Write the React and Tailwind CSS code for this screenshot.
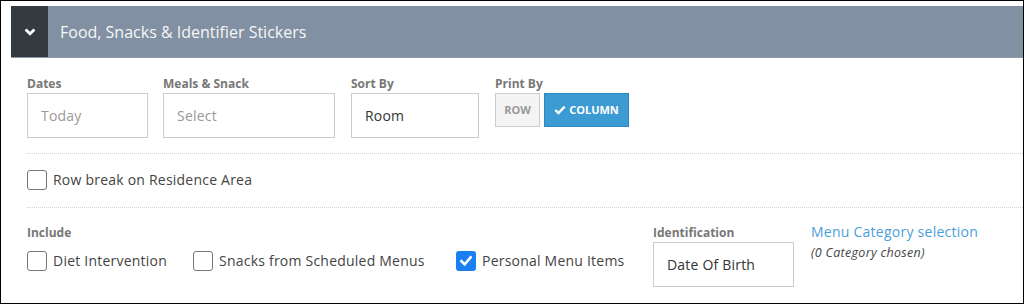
import React from 'react';

const Checkbox = ({ checked }) =>
  checked ? (
    <span className="w-[20px] h-[20px] rounded-[3px] bg-[#1a7ff2] flex items-center justify-center shrink-0">
      <svg width="14" height="14" viewBox="0 0 14 14">
        <path d="M2.5 7.2 L5.6 10.3 L11.6 3.4" fill="none" stroke="white" strokeWidth="2.6" strokeLinecap="square" />
      </svg>
    </span>
  ) : (
    <span className="w-[20px] h-[20px] rounded-[3px] border border-[#777] bg-white shrink-0" />
  );

const CheckItem = ({ label, checked, width }) => (
  <label className={`flex items-center gap-[6px] ${width}`}>
    <Checkbox checked={checked} />
    <span className="text-[14px] leading-[20px] tracking-[0.22px] text-[#444]">{label}</span>
  </label>
);

const Field = ({ label, value, placeholder, width }) => (
  <div className="flex flex-col">
    <span className="text-[12px] leading-[16px] font-bold text-[#777] mb-[1px]">{label}</span>
    <div className={`h-[45px] ${width} border border-[#ccc] flex items-center pl-[13px] text-[14px] tracking-[0.2px]`}>
      <span className={placeholder ? 'text-[#999]' : 'text-[#333]'}>{value}</span>
    </div>
  </div>
);

export default function App() {
  return (
    <div className="w-[1024px] h-[305px] bg-white font-['Open_Sans',sans-serif]">
      <div className="w-[1024px] h-[304px] border border-black flex flex-col">
        {/* panel header */}
        <div className="ml-[10px] mt-[5px] h-[52px] flex bg-[#8190a2] border-b border-dotted border-[#9ba4ae]">
          <div className="w-[37px] bg-[#353a41] flex items-center justify-center">
            <svg width="12" height="8" viewBox="0 0 12 8">
              <path d="M1.6 1.6 L6 5.8 L10.4 1.6" fill="none" stroke="white" strokeWidth="2.8" />
            </svg>
          </div>
          <div className="pl-[12px] flex items-center text-[16px] text-[#f7f7f7]">
            Food, Snacks &amp; Identifier Stickers
          </div>
        </div>

        <div className="pl-[26px]">
          {/* filters */}
          <div className="flex items-start pt-[18px] pb-[15px] border-b border-dotted border-[#d4d4d4]">
            <Field label="Dates" value="Today" placeholder width="w-[121px]" />
            <div className="ml-[15px]">
              <Field label="Meals & Snack" value="Select" placeholder width="w-[172px]" />
            </div>
            <div className="ml-[16px]">
              <Field label="Sort By" value="Room" width="w-[128px]" />
            </div>
            <div className="ml-[16px] flex flex-col">
              <span className="text-[12px] leading-[16px] font-bold text-[#777] mb-[1px]">Print By</span>
              <div className="flex gap-[4px]">
                <button className="h-[34px] w-[45px] bg-[#f4f4f4] border border-[#ccc] text-[11px] font-bold text-[#999]">
                  ROW
                </button>
                <button className="h-[34px] w-[85px] bg-[#3d9bd3] border border-[#2b88c0] text-[11px] font-bold text-white flex items-center justify-center gap-[3px]">
                  <svg width="12" height="10" viewBox="0 0 12 10">
                    <path d="M1.3 5 L4.4 8 L10.7 1.6" fill="none" stroke="white" strokeWidth="2.4" />
                  </svg>
                  COLUMN
                </button>
              </div>
            </div>
          </div>

          {/* row break */}
          <div className="pt-[16px] pb-[17px] border-b border-dotted border-[#d4d4d4]">
            <CheckItem label="Row break on Residence Area" width="" />
          </div>

          {/* include */}
          <div className="flex items-start pt-[17px]">
            <div className="flex flex-col">
              <span className="text-[12px] leading-[16px] font-bold text-[#777]">Include</span>
              <div className="flex mt-[10px]">
                <CheckItem label="Diet Intervention" width="w-[166px]" />
                <CheckItem label="Snacks from Scheduled Menus" width="w-[263px]" />
                <CheckItem label="Personal Menu Items" checked width="w-[197px]" />
              </div>
            </div>
            <Field label="Identification" value="Date Of Birth" width="w-[141px]" />
            <div className="ml-[17px] flex flex-col -mt-[1px]">
              <span className="text-[14px] leading-[16px] tracking-[0.25px] text-[#4a9fdb]">Menu Category selection</span>
              <span className="mt-[5px] text-[12.5px] leading-[16px] tracking-[0.3px] italic text-[#444]">(0 Category chosen)</span>
            </div>
          </div>
        </div>
      </div>
    </div>
  );
}
